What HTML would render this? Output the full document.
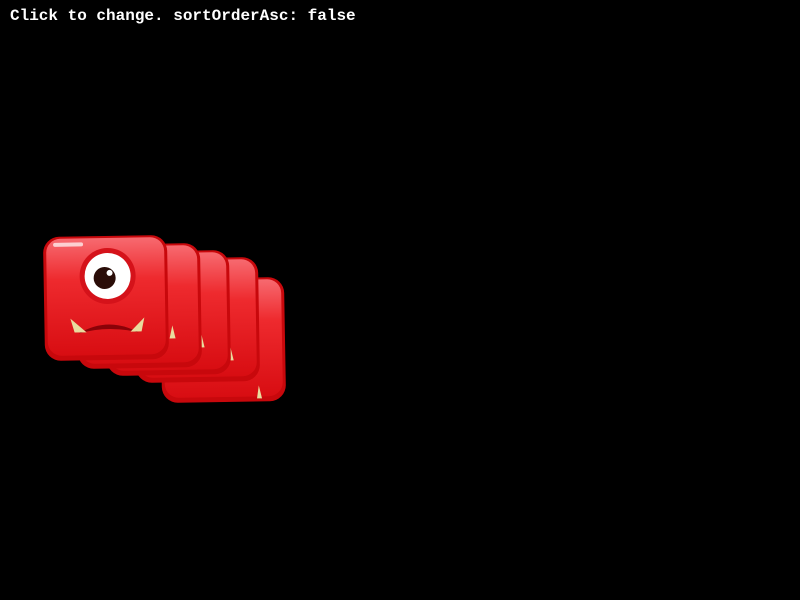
<!DOCTYPE html>
<html><head><style>
html,body{margin:0;padding:0;background:#000;width:800px;height:600px;overflow:hidden}
.t{position:absolute;left:10px;top:7px;font:bold 16px "Liberation Mono",monospace;color:#fff;white-space:pre}
svg{position:absolute;left:0;top:0}
</style></head><body>
<div class="t">Click to change. sortOrderAsc: false</div>
<svg width="800" height="600">
<defs>
<linearGradient id="g" x1="0" y1="0" x2="0" y2="1">
<stop offset="0" stop-color="#f76a70"/><stop offset="0.35" stop-color="#ee2a2e"/><stop offset="1" stop-color="#d80d12"/>
</linearGradient>
<g id="m">
<rect x="0" y="0" width="124" height="124" rx="16" fill="#c8080c"/>
<rect x="3" y="2" width="118" height="117" rx="14" fill="url(#g)"/>
<rect x="10" y="6" width="30" height="4" rx="2" fill="#fff" opacity="0.7"/>
</g>
<g id="face">
<circle cx="64" cy="40" r="28" fill="#d5121a"/>
<circle cx="64" cy="40" r="23" fill="#fff"/>
<circle cx="61" cy="42" r="11" fill="#2a0d08"/>
<circle cx="66" cy="37" r="3" fill="#fff"/>
<path d="M34 97 Q64 80 94 97 Q64 89 34 97Z" fill="#8a0208"/>
<polygon points="26,82 30,96 42,96" fill="#e9dc9e"/>
<polygon points="100,82 97,96 86,96" fill="#e9dc9e"/>
</g>
</defs>
<g transform="translate(161,278) rotate(-1 62 62)"><use href="#m"/><polygon points="97,108 95,121 100,121" fill="#e9dc9e"/></g>
<g transform="translate(135,258) rotate(-1 62 62)"><use href="#m"/><polygon points="95,90 92,103 98,103" fill="#e9dc9e"/></g>
<g transform="translate(106,251) rotate(-1 62 62)"><use href="#m"/><polygon points="95,84 92,97 98,97" fill="#e9dc9e"/></g>
<g transform="translate(77,244) rotate(-1 62 62)"><use href="#m"/><polygon points="95,82 92,95 98,95" fill="#e9dc9e"/></g>
<g transform="translate(44,236) rotate(-1 62 62)"><use href="#m"/><use href="#face"/></g>
</svg>
</body></html>
